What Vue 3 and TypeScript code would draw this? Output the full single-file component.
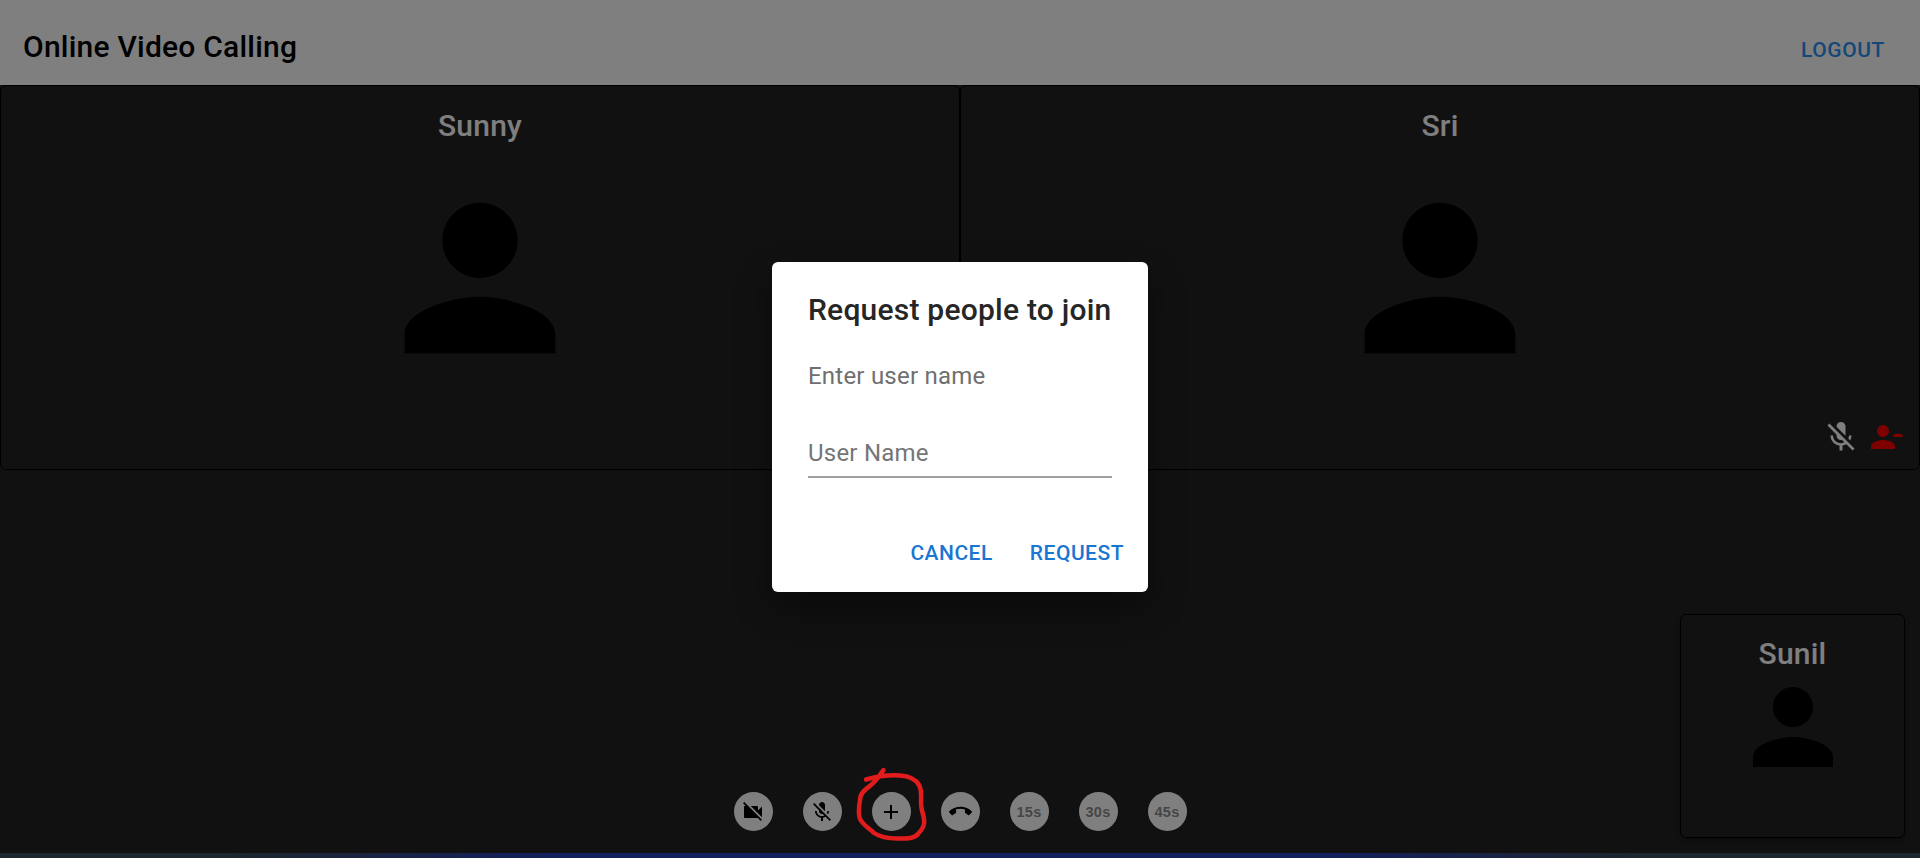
<script setup lang="ts">
const person = 'M12 12c2.21 0 4-1.79 4-4s-1.79-4-4-4-4 1.79-4 4 1.79 4 4 4zm0 2c-2.67 0-8 1.34-8 4v2h16v-2c0-2.66-5.33-4-8-4z'
const micOff = 'M19 11h-1.7c0 .74-.16 1.43-.43 2.05l1.23 1.23c.56-.98.9-2.09.9-3.28zm-4.02.17c0-.06.02-.11.02-.17V5c0-1.66-1.34-3-3-3S9 3.34 9 5v.18l5.98 5.99zM4.27 3L3 4.27l6.01 6.01V11c0 1.66 1.33 3 2.99 3 .22 0 .44-.03.65-.08l1.66 1.66c-.71.33-1.5.52-2.31.52-2.76 0-5.3-2.1-5.3-5.1H5c0 3.41 2.72 6.23 6 6.72V21h2v-3.28c.91-.13 1.77-.45 2.54-.9L19.73 21 21 19.73 4.27 3z'
const personRemove = 'M14 8c0-2.21-1.79-4-4-4S6 5.79 6 8s1.79 4 4 4 4-1.79 4-4zm3 2v2h6v-2h-6zM2 18v2h16v-2c0-2.66-5.33-4-8-4s-8 1.34-8 4z'
const controls: { icon?: string; label?: string; size?: number }[] = [
  { icon: 'M21 6.5l-4 4V7c0-.55-.45-1-1-1H9.82L21 17.18V6.5zM3.27 2L2 3.27 4.73 6H4c-.55 0-1 .45-1 1v10c0 .55.45 1 1 1h12c.21 0 .39-.08.54-.18L19.73 21 21 19.73 3.27 2z' },
  { icon: micOff },
  { icon: 'M19 13h-6v6h-2v-6H5v-2h6V5h2v6h6v2z' },
  { icon: 'M12 9c-1.6 0-3.15.25-4.6.72v3.1c0 .39-.23.74-.56.9-.98.49-1.87 1.12-2.66 1.85-.18.18-.43.28-.7.28-.28 0-.53-.11-.71-.29L.29 13.08c-.18-.17-.29-.42-.29-.7 0-.28.11-.53.29-.71C3.34 8.78 7.46 7 12 7s8.66 1.78 11.71 4.67c.18.18.29.43.29.71 0 .28-.11.53-.29.71l-2.48 2.48c-.18.18-.43.29-.71.29-.27 0-.52-.11-.7-.28-.79-.74-1.69-1.36-2.67-1.85-.33-.16-.56-.5-.56-.9v-3.1C15.15 9.25 13.6 9 12 9z', size: 23 },
  { label: '15s' },
  { label: '30s' },
  { label: '45s' }
]
</script>

<template>
  <div class="page">
    <header class="topbar">
      <h1 class="brand">Online Video Calling</h1>
      <button class="logout" type="button">LOGOUT</button>
    </header>

    <main class="stage">
      <section class="peers">
        <article class="tile">
          <h2 class="name">Sunny</h2>
          <svg class="avatar" viewBox="0 0 24 24"><path :d="person" /></svg>
        </article>
        <article class="tile">
          <h2 class="name">Sri</h2>
          <svg class="avatar" viewBox="0 0 24 24"><path :d="person" /></svg>
          <div class="tile-actions">
            <svg class="tile-icon mic" viewBox="0 0 24 24"><path :d="micOff" /></svg>
            <svg class="tile-icon kick" viewBox="0 0 24 24"><path :d="personRemove" /></svg>
          </div>
        </article>
      </section>

      <section class="dock">
        <div class="dock-spacer"></div>
        <nav class="controls">
          <button v-for="(c, i) in controls" :key="i" class="round" type="button">
            <svg v-if="c.icon" viewBox="0 0 24 24" :width="c.size ?? 24" :height="c.size ?? 24"><path :d="c.icon" /></svg>
            <template v-else>{{ c.label }}</template>
          </button>
        </nav>
        <article class="pip">
          <h2 class="name pip-name">Sunil</h2>
          <svg class="pip-avatar" viewBox="0 0 24 24"><path :d="person" /></svg>
        </article>
      </section>
    </main>

    <footer class="strip"></footer>

    <div class="backdrop"></div>

    <div class="dialog" role="dialog">
      <h2 class="dialog-title">Request people to join</h2>
      <p class="dialog-text">Enter user name</p>
      <div class="field">User Name</div>
      <div class="dialog-actions">
        <button class="action" type="button">CANCEL</button>
        <button class="action" type="button">REQUEST</button>
      </div>
    </div>

    <svg class="scribble" viewBox="0 0 1920 858">
      <path d="M883.500 770 C880 775 876 781 871 785 C866 789 860 793 860 800 C859 806 858 814 860 819 C864 826 870 829 874 833 C880 837 888 838.500 897 838.500 C906 838.500 914 839 918 834 C923 829 925 824 924 819 C923 813 921 809 921 803 C921 796 922 790 919 785 C915 778 908 776 900 775.500 C890 775 878 776 866 779.500" />
    </svg>
  </div>
</template>

<style>
html, body { margin: 0; background: #222; }
</style>

<style scoped>
.page {
  position: relative;
  display: flex;
  flex-direction: column;
  height: 858px;
  overflow: hidden;
  font-family: Roboto, "Liberation Sans", sans-serif;
  background: #222;
}
.topbar {
  display: flex;
  align-items: center;
  justify-content: space-between;
  box-sizing: border-box;
  height: 85px;
  padding: 0 35px 0 23px;
  background: #fff;
}
.brand {
  margin: 8px 0 0;
  font-size: 30px;
  font-weight: 500;
  line-height: 1.6;
  letter-spacing: .225px;
  color: #000;
}
.logout {
  margin: 15px 0 0;
  padding: 0;
  border: 0;
  background: none;
  font: 500 21px/1.75 Roboto, sans-serif;
  letter-spacing: .6px;
  color: #2a8ef0;
}
.stage {
  flex: 1;
  display: flex;
  flex-direction: column;
  min-height: 0;
}
.peers {
  display: grid;
  grid-template-columns: 1fr 1fr;
  height: 385px;
}
.tile {
  position: relative;
  display: flex;
  flex-direction: column;
  align-items: center;
  box-sizing: border-box;
  overflow: hidden;
  border: 1px solid #000;
  border-radius: 6px;
  background: #222;
}
.name {
  margin: 0;
  font-size: 30px;
  font-weight: 500;
  line-height: 48px;
  letter-spacing: .225px;
  color: #fff;
}
.tile > .name { margin-top: 16px; }
.avatar {
  flex: none;
  width: 226px;
  height: 226px;
  margin-top: 14.500px;
  fill: #000;
}
.tile-actions {
  position: absolute;
  right: 15px;
  bottom: 14px;
  display: flex;
  gap: 9px;
}
.tile-icon { width: 36px; height: 36px; }
.mic { fill: #fff; }
.kick { fill: #f00; }
.dock {
  flex: 1;
  display: grid;
  grid-template-columns: 1fr auto 1fr;
  align-items: end;
}
.controls {
  display: flex;
  gap: 30px;
  margin-bottom: 22px;
}
.round {
  display: flex;
  align-items: center;
  justify-content: center;
  width: 39px;
  height: 39px;
  padding: 0;
  border: 0;
  border-radius: 50%;
  background: #fff;
  font: 700 14.500px "Liberation Sans", Arial, sans-serif;
  letter-spacing: .3px;
  color: #8c8c8c;
}
.round svg { fill: #000; }
.pip {
  justify-self: end;
  display: flex;
  flex-direction: column;
  align-items: center;
  box-sizing: border-box;
  width: 225px;
  height: 224px;
  margin: 0 15px 15px 0;
  overflow: hidden;
  border: 1px solid #000;
  border-radius: 6px;
  background: #222;
  box-shadow: 0 3px 5px rgba(0, 0, 0, .3);
}
.pip-name { margin-top: 15px; }
.pip-avatar {
  flex: none;
  width: 120px;
  height: 120px;
  margin-top: -11.500px;
  fill: #000;
}
.strip {
  flex: none;
  height: 5px;
  background: linear-gradient(90deg, #3c4c5c 0%, #3c4c5c 12%, #2440c0 30%, #2440c0 68%, #3c4c5c 85%, #3c4c5c 100%);
}
.backdrop {
  position: absolute;
  inset: 0;
  background: rgba(0, 0, 0, .5);
}
.dialog {
  position: absolute;
  left: 772px;
  top: 262px;
  box-sizing: border-box;
  width: 376px;
  height: 330px;
  padding: 24px 36px 0;
  border-radius: 6px;
  background: #fff;
  box-shadow: 0 16px 36px rgba(0, 0, 0, .4);
}
.dialog-title {
  margin: 0;
  font-size: 30px;
  font-weight: 500;
  line-height: 48px;
  letter-spacing: .225px;
  white-space: nowrap;
  color: #262626;
}
.dialog-text {
  margin: 24px 0 0;
  font-size: 24px;
  line-height: 36px;
  letter-spacing: .225px;
  color: #6f6f6f;
}
.field {
  box-sizing: border-box;
  height: 47px;
  margin: 37px 0 0;
  padding: 4px 0 0;
  border-bottom: 2px solid #a0a0a0;
  font-size: 24px;
  line-height: 36px;
  letter-spacing: .225px;
  color: #757575;
}
.dialog-actions {
  position: absolute;
  right: 24px;
  bottom: 20px;
  display: flex;
  gap: 37px;
}
.action {
  padding: 0;
  border: 0;
  background: none;
  font: 500 21px/1.75 Roboto, sans-serif;
  letter-spacing: .5px;
  color: #1976d2;
}
.scribble {
  position: absolute;
  inset: 0;
  width: 1920px;
  height: 858px;
  fill: none;
  stroke: #e21c1c;
  stroke-width: 4.500;
  stroke-linecap: round;
  stroke-linejoin: round;
  pointer-events: none;
}
</style>
